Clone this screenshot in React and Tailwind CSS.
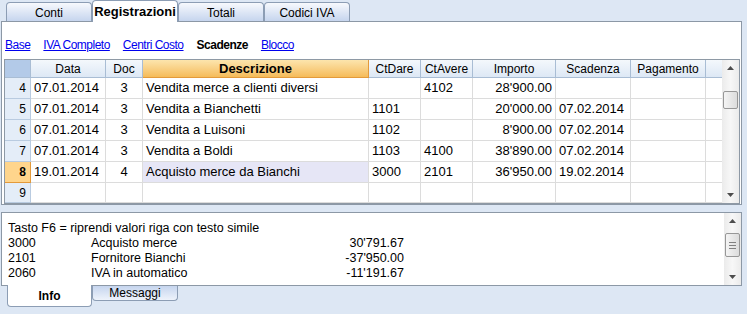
import React from "react";

const font = { fontFamily: '"Liberation Sans", Arial, sans-serif' };

const topTabs = [
  { label: "Conti" },
  { label: "Registrazioni", active: true },
  { label: "Totali" },
  { label: "Codici IVA" },
];

const links = [
  { label: "Base" },
  { label: "IVA Completo" },
  { label: "Centri Costo" },
  { label: "Scadenze", current: true },
  { label: "Blocco" },
];

const columns = [
  { key: "data", label: "Data", align: "text-left" },
  { key: "doc", label: "Doc", align: "text-center" },
  { key: "desc", label: "Descrizione", align: "text-left" },
  { key: "dare", label: "CtDare", align: "text-left" },
  { key: "avere", label: "CtAvere", align: "text-left" },
  { key: "importo", label: "Importo", align: "text-right" },
  { key: "scad", label: "Scadenza", align: "text-left" },
  { key: "pag", label: "Pagamento", align: "text-left" },
];

const rows = [
  { n: 4, data: "07.01.2014", doc: "3", desc: "Vendita merce a clienti diversi", dare: "", avere: "4102", importo: "28'900.00", scad: "", pag: "" },
  { n: 5, data: "07.01.2014", doc: "3", desc: "Vendita a Bianchetti", dare: "1101", avere: "", importo: "20'000.00", scad: "07.02.2014", pag: "" },
  { n: 6, data: "07.01.2014", doc: "3", desc: "Vendita a Luisoni", dare: "1102", avere: "", importo: "8'900.00", scad: "07.02.2014", pag: "" },
  { n: 7, data: "07.01.2014", doc: "3", desc: "Vendita a Boldi", dare: "1103", avere: "4100", importo: "38'890.00", scad: "07.02.2014", pag: "" },
  { n: 8, data: "19.01.2014", doc: "4", desc: "Acquisto merce da Bianchi", dare: "3000", avere: "2101", importo: "36'950.00", scad: "19.02.2014", pag: "", current: true },
  { n: 9, data: "", doc: "", desc: "", dare: "", avere: "", importo: "", scad: "", pag: "" },
];

const info = [
  { conto: "3000", desc: "Acquisto merce", importo: "30'791.67" },
  { conto: "2101", desc: "Fornitore Bianchi", importo: "-37'950.00" },
  { conto: "2060", desc: "IVA in automatico", importo: "-11'191.67" },
];

function ArrowUp() {
  return (
    <svg width="7" height="4" viewBox="0 0 7 4">
      <path d="M0 4 L3.5 0 L7 4 Z" fill="#4d4d4d" />
    </svg>
  );
}

function ArrowDown() {
  return (
    <svg width="7" height="4" viewBox="0 0 7 4">
      <path d="M0 0 L3.5 4 L7 0 Z" fill="#4d4d4d" />
    </svg>
  );
}

function Scrollbar({ thumbTop, thumbHeight, grip }) {
  return (
    <div className="relative flex h-full w-[17px] flex-col items-center justify-between bg-gradient-to-r from-[#ebebeb] via-[#f7f7f7] to-[#ebebeb] py-[6px]">
      <ArrowUp />
      <div
        className="absolute left-[1px] flex w-[15px] flex-col items-center justify-center gap-[2px] rounded-[2px] border border-[#979797] bg-gradient-to-r from-[#f4f4f4] to-[#dcdcdc]"
        style={{ top: thumbTop, height: thumbHeight }}
      >
        {grip && (
          <>
            <span className="h-px w-[7px] bg-[#808080]" />
            <span className="h-px w-[7px] bg-[#808080]" />
            <span className="h-px w-[7px] bg-[#808080]" />
          </>
        )}
      </div>
      <ArrowDown />
    </div>
  );
}

function TopTab({ tab }) {
  if (tab.active) {
    return (
      <div className="relative z-10 -mb-px flex h-[22px] w-[86px] items-center justify-center rounded-t-[4px] border border-b-0 border-[#8c9db4] bg-white text-[13px] font-bold text-black">
        {tab.label}
      </div>
    );
  }
  return (
    <div className="flex h-[19px] w-[86px] items-center justify-center rounded-t-[4px] border border-b-0 border-[#8c9db4] bg-gradient-to-b from-[#f7f9fd] to-[#c6d5ee] pt-[2px] text-[12px] text-black">
      {tab.label}
    </div>
  );
}

export default function App() {
  return (
    <div className="flex h-[314px] w-[747px] flex-col overflow-hidden bg-[#dde7f4]" style={font}>
      <div className="flex h-[21px] items-end pl-[6px]">
        {topTabs.map((tab) => (
          <TopTab key={tab.label} tab={tab} />
        ))}
      </div>

      <div className="ml-[1px] flex h-[184px] w-[741px] flex-col border border-[#8c98a6] bg-white">
        <div className="flex h-[37px] items-center gap-[13px] pl-[3px] pt-[8px] text-[12px] tracking-[-0.5px]">
          {links.map((l) =>
            l.current ? (
              <span key={l.label} className="font-bold text-black">
                {l.label}
              </span>
            ) : (
              <span key={l.label} className="text-[#0000ee] underline">
                {l.label}
              </span>
            )
          )}
        </div>

        <div className="ml-[2px] flex h-[145px] w-[736px] border border-[#8e99a5]">
          <div className="grid flex-1 grid-cols-[26px_75px_37px_226px_52px_52px_83px_75px_75px_1fr] grid-rows-[18px_21px_21px_21px_21px_21px_1fr] text-[13px] text-black">
            <div className="border-r border-b border-[#a9bdd4] bg-[#b3cae8]" />
            {columns.map((c) =>
              c.key === "desc" ? (
                <div
                  key={c.key}
                  className="flex items-center justify-center border-r border-b border-[#e39a3b] bg-gradient-to-b from-[#fce5ad] to-[#f5bb58] text-[13px] font-bold"
                >
                  {c.label}
                </div>
              ) : (
                <div
                  key={c.key}
                  className="flex items-center justify-center border-r border-b border-[#a9bdd4] bg-gradient-to-b from-[#f4f8fc] to-[#dde8f5] text-[12px]"
                >
                  {c.label}
                </div>
              )
            )}
            <div className="border-b border-[#a9bdd4] bg-gradient-to-b from-[#f4f8fc] to-[#dde8f5]" />

            {rows.map((r) => (
              <React.Fragment key={r.n}>
                <div
                  className={
                    r.current
                      ? "flex items-center justify-end border-r border-b border-[#e39a3b] bg-[#ffd58c] pr-[4px] text-[12px] font-bold"
                      : "flex items-center justify-end border-r border-b border-[#b9cbe0] bg-[#e4edf8] pr-[4px] text-[12px]"
                  }
                >
                  {r.n}
                </div>
                {columns.map((c) => (
                  <div
                    key={c.key}
                    className={`flex items-center overflow-hidden whitespace-nowrap border-r border-b border-[#dcdcdc] px-[3px] ${
                      c.align === "text-right" ? "justify-end" : c.align === "text-center" ? "justify-center" : "justify-start"
                    } ${r.current && c.key === "desc" ? "bg-[#e6e6f6]" : ""}`}
                  >
                    {r[c.key]}
                  </div>
                ))}
                <div className="border-b border-[#dcdcdc]" />
              </React.Fragment>
            ))}
          </div>
          <Scrollbar thumbTop={31} thumbHeight={18} />
        </div>
      </div>

      <div className="ml-[1px] mt-[7px] flex h-[74px] w-[741px] border border-[#8c98a6] bg-white text-[12.5px] text-black">
        <div className="flex flex-1 flex-col pl-[6px] pt-[8px] leading-[15px]">
          <div>Tasto F6 = riprendi valori riga con testo simile</div>
          {info.map((i) => (
            <div key={i.conto} className="flex">
              <span className="w-[83px]">{i.conto}</span>
              <span className="w-[222px]">{i.desc}</span>
              <span className="w-[91px] text-right">{i.importo}</span>
            </div>
          ))}
        </div>
        <Scrollbar thumbTop={20} thumbHeight={24} grip />
      </div>

      <div className="flex items-start pl-[7px]">
        <div className="relative z-10 -mt-px flex h-[22px] w-[85px] items-center justify-center rounded-b-[4px] border border-t-0 border-[#8c9db4] bg-white text-[12px] font-bold">
          Info
        </div>
        <div className="flex h-[15px] w-[86px] items-center justify-center rounded-b-[4px] border border-t-0 border-[#8c9db4] bg-gradient-to-b from-[#c6d5ee] to-[#eef3fb] text-[12px]">
          Messaggi
        </div>
      </div>
    </div>
  );
}
